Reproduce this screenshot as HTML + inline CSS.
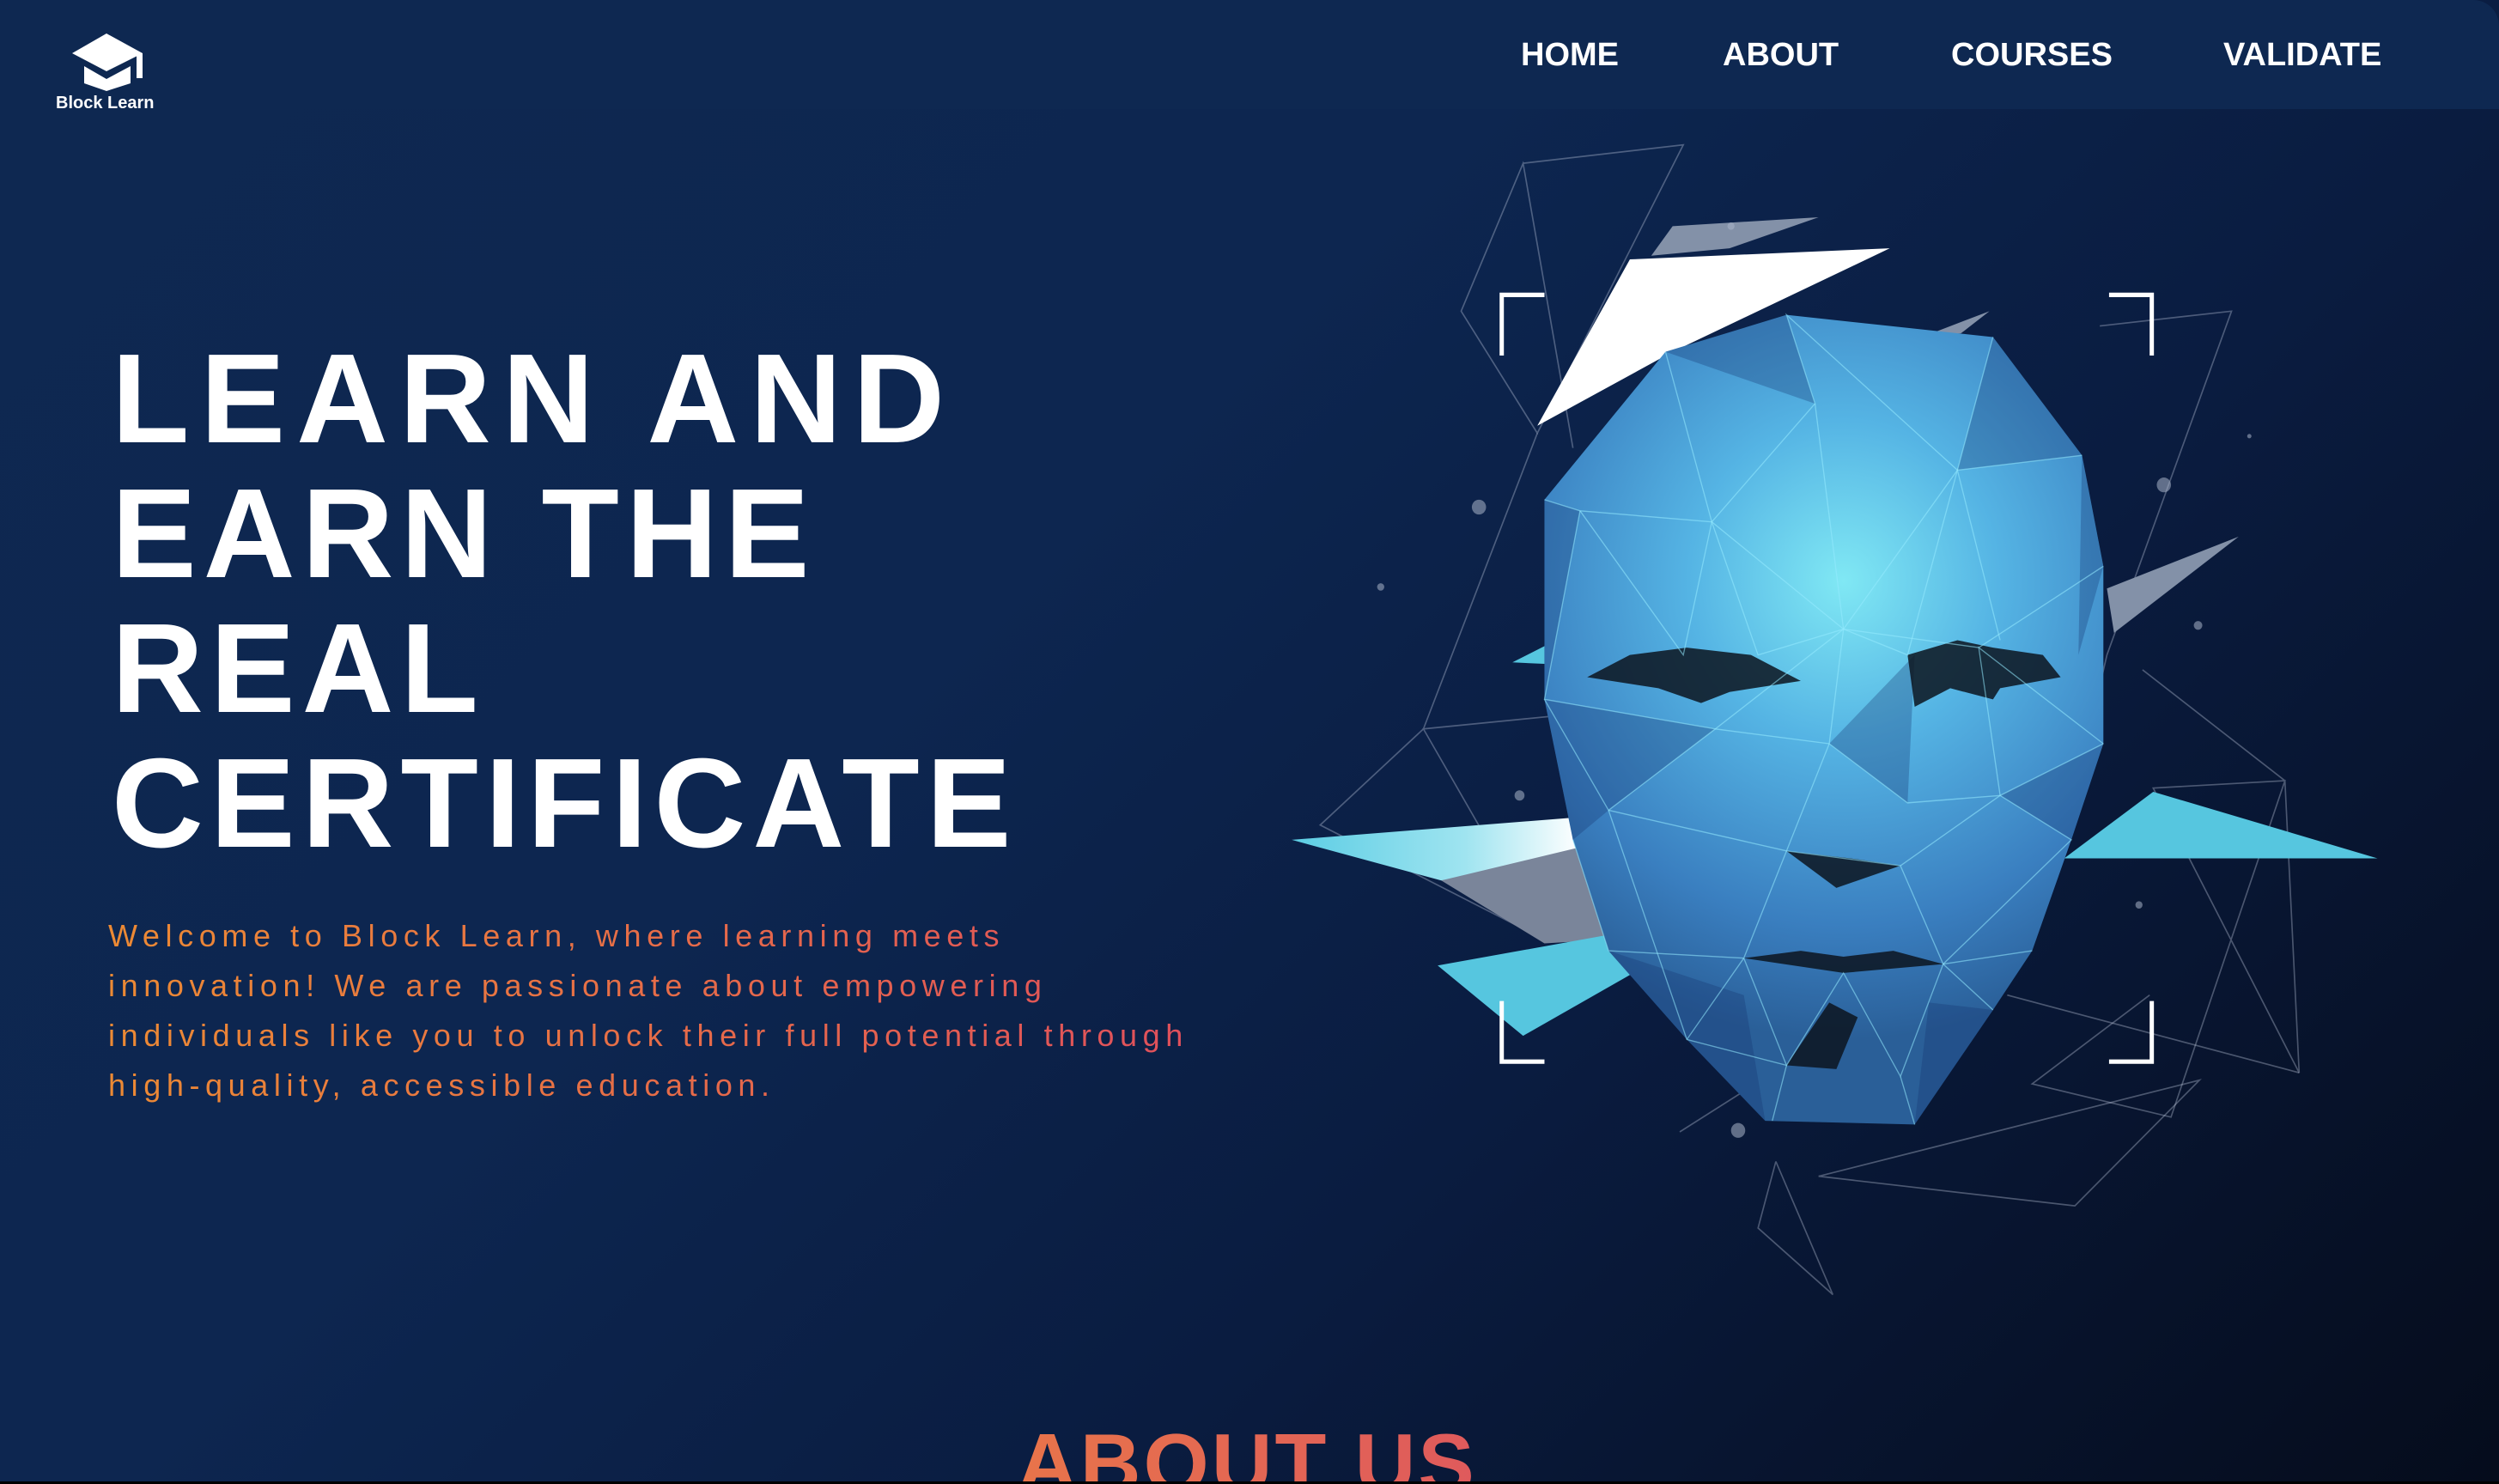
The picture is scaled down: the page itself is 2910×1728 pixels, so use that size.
<!DOCTYPE html>
<html><head><meta charset="utf-8"><style>
*{margin:0;padding:0;box-sizing:border-box}
html,body{width:2910px;height:1728px;overflow:hidden;background:#000}
.page{position:absolute;left:0;top:0;width:2910px;height:1725px;background:linear-gradient(135deg,#0e2851 0%,#0d2650 40%,#0a1c40 65%,#050c1c 100%);overflow:hidden}
.nav{position:absolute;left:0;top:0;width:2910px;height:127px;background:#0e2851;border-top-right-radius:30px}
.nav a{position:absolute;top:44px;font:bold 38px/40px "Liberation Sans",sans-serif;color:#fff;text-decoration:none;letter-spacing:0}
.logo-t{position:absolute;left:65px;top:108px;font:bold 20px/24px "Liberation Sans",sans-serif;color:#fff}
h1{position:absolute;left:130px;top:386px;font:bold 148px/157px "Liberation Sans",sans-serif;color:#fff;letter-spacing:8px;white-space:nowrap}
h1 .w{letter-spacing:13px}
p.lead{position:absolute;left:126px;top:1061px;font:36px/58px "Liberation Sans",sans-serif;letter-spacing:6.6px;white-space:nowrap;background:linear-gradient(90deg,#ec8a34,#e0505c);-webkit-background-clip:text;background-clip:text;color:transparent}
h2{position:absolute;left:1184px;top:1644px;font:bold 98px/120px "Liberation Sans",sans-serif;letter-spacing:3px;white-space:nowrap;background:linear-gradient(90deg,#e8744a,#df5a5c);-webkit-background-clip:text;background-clip:text;color:transparent}
</style></head><body>
<div class="page">
<div class="nav">
 <svg style="position:absolute;left:0;top:0" width="200" height="120" viewBox="0 0 200 120">
  <polygon points="124,39 166,62 124,83 84,62" fill="#fff"/>
  <rect x="159" y="62" width="7" height="29" fill="#fff"/>
  <polygon points="98,77 124,92 152,77 152,97 124,106 98,97" fill="#fff"/>
 </svg>
 <div class="logo-t">Block Learn</div>
 <a style="left:1771px">HOME</a>
 <a style="left:2006px">ABOUT</a>
 <a style="left:2272px">COURSES</a>
 <a style="left:2589px">VALIDATE</a>
</div>
<h1><span class="w">LEARN AND</span><br>EARN THE<br>REAL<br>CERTIFICATE</h1>
<p class="lead">Welcome to Block Learn, where learning meets<br>innovation! We are passionate about empowering<br>individuals like you to unlock their full potential through<br>high-quality, accessible education.</p>

<svg style="position:absolute;left:1500px;top:160px" width="1300" height="1350" viewBox="0 0 1568 1568" preserveAspectRatio="none">
<defs>
 <radialGradient id="fg" cx="780" cy="600" r="620" gradientUnits="userSpaceOnUse">
  <stop offset="0" stop-color="#80e8f4"/><stop offset="0.35" stop-color="#55b4e4"/><stop offset="0.75" stop-color="#3a7fc0"/><stop offset="1" stop-color="#2a5f98"/>
 </radialGradient>
 <linearGradient id="wc" x1="0" y1="0" x2="1" y2="0"><stop offset="0" stop-color="#5ccde4"/><stop offset="0.6" stop-color="#9fe4f0"/><stop offset="1" stop-color="#fff"/></linearGradient>
</defs>
<g stroke="rgba(200,210,230,0.35)" stroke-width="2" fill="none">
 <polyline points="330,35 555,10 350,400 243,235 330,35 400,420"/>
 <polyline points="350,400 190,800 45,930 360,1085 190,800 400,780"/>
 <polyline points="1140,255 1325,235 1150,700 1090,950"/>
 <polyline points="1200,720 1400,870 1420,1265 1215,880 1400,870 1240,1325 1045,1280 1210,1160"/>
 <polyline points="745,1405 1280,1275 1105,1445 745,1405"/>
 <polyline points="685,1385 660,1475 765,1565 685,1385"/>
 <polyline points="550,1345 640,1290"/>
 <polyline points="1010,1160 1420,1265"/>
</g>
<polygon points="510,160 540,120 745,108 620,150" fill="#8391a8"/>
<polygon points="890,270 985,235 945,265" fill="#8391a8"/>
<polygon points="1150,610 1335,540 1160,670" fill="#8391a8"/>
<polygon points="215,1005 440,940 450,1085 360,1090" fill="#7a859a"/>
<polygon points="5,950 400,920 410,960 215,1005" fill="url(#wc)"/>
<polygon points="210,1120 470,1075 485,1130 330,1215" fill="#56c6df"/>
<polygon points="1090,975 1215,885 1530,975" fill="#56c6df"/>
<polygon points="315,710 360,688 360,712" fill="#56c6df"/>
<polygon points="350,390 480,165 845,150 540,290" fill="#fff"/>
<polygon points="530,290 700,240 990,270 1115,430 1145,580 1145,820 1100,950 1045,1100 990,1180 880,1335 670,1330 560,1220 450,1100 400,950 360,760 360,490" fill="url(#fg)"/>
<g fill="rgba(20,50,110,0.3)">
 <polygon points="360,490 410,505 360,760"/>
 <polygon points="1115,430 1145,580 1110,700"/>
 <polygon points="360,760 600,800 450,910 400,950"/>
 <polygon points="1145,820 1000,890 1100,950"/>
 <polygon points="450,1100 560,1220 670,1330 640,1160"/>
 <polygon points="990,1180 880,1335 900,1170"/>
 <polygon points="760,820 880,700 870,900"/>
 <polygon points="530,290 700,240 740,360"/>
 <polygon points="990,270 1115,430 940,450"/>
</g>
<g fill="rgba(12,20,30,0.85)">
 <polygon points="420,730 480,700 560,690 650,700 720,735 620,750 580,765 520,745"/>
 <polygon points="870,700 940,680 990,690 1060,700 1085,730 1000,745 990,760 930,745 880,770"/>
 <polygon points="700,965 790,975 860,985 770,1015"/>
 <polygon points="640,1110 720,1100 780,1108 850,1100 920,1118 780,1130"/>
 <polygon points="700,1255 760,1170 800,1190 770,1260"/>
</g>
<g stroke="rgba(150,235,255,0.55)" stroke-width="1.6" fill="none">
 <polyline points="530,290 595,520 740,360 700,240 940,450 990,270"/>
 <polyline points="360,490 410,505 595,520 780,665 940,450 1115,430"/>
 <polyline points="410,505 360,760 600,800 780,665 970,690 1145,580"/>
 <polyline points="410,505 555,700 595,520 660,700 780,665 870,700 940,450 1000,680"/>
 <polyline points="360,760 450,910 600,800 760,820 870,900 1000,890 1145,820"/>
 <polyline points="450,910 700,965 760,820 780,665"/>
 <polyline points="400,950 450,1100 640,1110 700,965 860,985 920,1118 1045,1100"/>
 <polyline points="450,910 560,1220 700,1255 680,1330"/>
 <polyline points="640,1110 700,1255 780,1130 860,1270 920,1118 990,1180"/>
 <polyline points="860,985 1000,890 1100,950 920,1118"/>
 <polyline points="1000,890 970,690 1145,820"/>
 <polyline points="740,360 780,665"/>
 <polyline points="560,1220 640,1110"/>
 <polyline points="860,1270 880,1335"/>
</g>
<g stroke="#fff" stroke-width="6" fill="none">
 <polyline points="360,213 300,213 300,295"/>
 <polyline points="1153,213 1213,213 1213,295"/>
 <polyline points="300,1168 300,1250 360,1250"/>
 <polyline points="1213,1168 1213,1250 1153,1250"/>
</g>
<g fill="rgba(170,180,200,0.55)">
 <circle cx="268" cy="500" r="10"/><circle cx="130" cy="608" r="5"/><circle cx="325" cy="890" r="7"/>
 <circle cx="1230" cy="470" r="10"/><circle cx="1278" cy="660" r="6"/><circle cx="1195" cy="1038" r="5"/>
 <circle cx="632" cy="1343" r="10"/><circle cx="1350" cy="404" r="3"/><circle cx="622" cy="120" r="5"/>
</g>
</svg>

<h2>ABOUT US</h2>
</div>
</body></html>
